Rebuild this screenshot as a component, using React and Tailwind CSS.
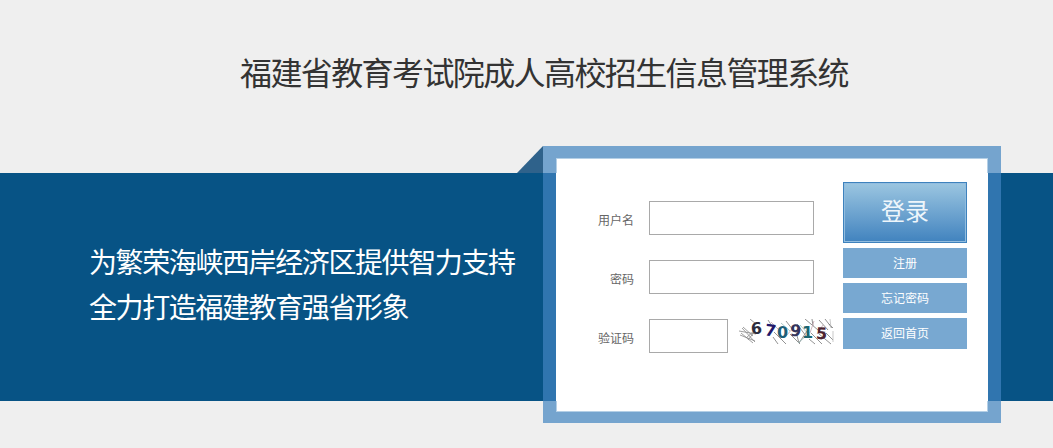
import React, { useState } from "react";

const links = [
  { label: "注册", className: "h-[30px]" },
  { label: "忘记密码", className: "h-[30px]" },
  { label: "返回首页", className: "h-[31px] pb-px" },
];

const digits = [
  { char: "6", x: 12, y: 15, color: "#2c2c3c", rotate: -4 },
  { char: "7", x: 26, y: 17, color: "#21176a", rotate: 8 },
  { char: "0", x: 38, y: 19, color: "#1d5f78", rotate: 0 },
  { char: "9", x: 51, y: 17, color: "#34345c", rotate: 4 },
  { char: "1", x: 63, y: 19, color: "#1b6470", rotate: 0 },
  { char: "5", x: 77, y: 20, color: "#4d2430", rotate: 3 },
];

function Captcha() {
  return (
    <svg width="95" height="26" viewBox="0 0 95 26" className="ml-[11px] shrink-0">
      <g fill="none" strokeWidth="0.8">
        <path
          stroke="#888"
          d="M0 12l17 3M1 16l15 6M3 9l13 14M7 19l9-8M4 8l10 9M9 21l7-9M11 0l6 5M2 14l12 10"
        />
        <path
          stroke="#777"
          d="M29 1l4 6M35 13l12 12M34 18l5 7M47 2l7 9M51 15l10 10M57 13l3 11M58 5l9 12M60 24l8-12M66 0l13 11M73 0l1 7M72 14l11 11M70 20l6 5M80 1l9 10M86 0l7 9M80 15l12 10M87 14l7 7M90 5l4 4"
        />
        <path stroke="#c4a5ae" d="M32 3l8 8M55 8l-8 9M75 2l-4 12M84 6l-6 9" />
        <path stroke="#9abdbb" d="M42 4l9 8M61 6l12 13M67 17l-8 7" />
        <path stroke="#bbb" d="M91 0l1 9M86 12l-4 9M94 12v11" />
      </g>
      {digits.map((digit) => (
        <text
          key={digit.x}
          x={digit.x}
          y={digit.y}
          fill={digit.color}
          transform={`rotate(${digit.rotate} ${digit.x + 5} ${digit.y - 5})`}
          className="font-['DejaVu_Sans',sans-serif] text-[16px] font-bold"
        >
          {digit.char}
        </text>
      ))}
    </svg>
  );
}

function Field({ label, type = "text", inputClass = "w-[165px]", children }) {
  const [value, setValue] = useState("");

  return (
    <div className="flex h-[34px]">
      <label className="w-[77px] pt-[10px] text-right text-xs leading-[18px] text-[#666]">
        {label}
      </label>
      <input
        type={type}
        aria-label={label}
        value={value}
        onChange={(e) => setValue(e.target.value)}
        className={`ml-[15px] h-[34px] shrink-0 border border-[#a9a9a9] bg-white px-2 text-sm outline-none ${inputClass}`}
      />
      {children}
    </div>
  );
}

function LoginCard() {
  return (
    <div className="h-[277px] w-[458px] bg-[#4185c1]/70 px-[13px] py-3">
      <div className="h-[254px] w-[432px] bg-[linear-gradient(#b4cfe6_15px,#fff_15px,#fff_243px,#b4cfe6_243px)] p-px">
        <form
          onSubmit={(e) => e.preventDefault()}
          className="flex h-full bg-white"
        >
          <div className="flex w-[286px] flex-col gap-[25px] pt-[42px]">
            <Field label="用户名" />
            <Field label="密码" type="password" />
            <Field label="验证码" inputClass="w-[79px]">
              <Captcha />
            </Field>
          </div>
          <div className="flex w-[124px] shrink-0 flex-col gap-[5px] pt-[23px]">
            <button
              type="submit"
              className="h-[61px] border border-[#3e82bd] text-2xl"
            >
              <span className="flex h-[59px] items-center justify-center border border-[#92bddf] bg-linear-to-b from-[#9ac5e0] to-[#4284bf] pb-[5px] text-[#eef6fb]">
                登录
              </span>
            </button>
            {links.map((link) => (
              <a
                key={link.label}
                href="#"
                className={`flex items-center justify-center bg-[#78a8d1] text-xs text-white ${link.className}`}
              >
                {link.label}
              </a>
            ))}
          </div>
        </form>
      </div>
    </div>
  );
}

function App() {
  return (
    <div className="h-[448px] overflow-hidden bg-[#efefef] font-['Noto_Sans_CJK_SC',sans-serif]">
      <header className="h-[173px] pl-[240px] pt-[47px]">
        <h1 className="whitespace-nowrap text-[32px] leading-[48px] tracking-tighter text-[#333]">
          福建省教育考试院成人高校招生信息管理系统
        </h1>
      </header>
      <main className="flex h-[228px] items-start bg-[#075385]">
        <div className="w-[517px] shrink-0 whitespace-nowrap pl-[89px] pt-[66px] text-[28px] leading-[45px] tracking-tighter text-white">
          <p>为繁荣海峡西岸经济区提供智力支持</p>
          <p>全力打造福建教育强省形象</p>
        </div>
        <div className="-mt-[27px] flex shrink-0 items-start">
          <svg width="26" height="27" viewBox="0 0 26 27">
            <path d="M26 0v27H0z" fill="#2f628b" />
          </svg>
          <LoginCard />
        </div>
      </main>
    </div>
  );
}

export default App;
